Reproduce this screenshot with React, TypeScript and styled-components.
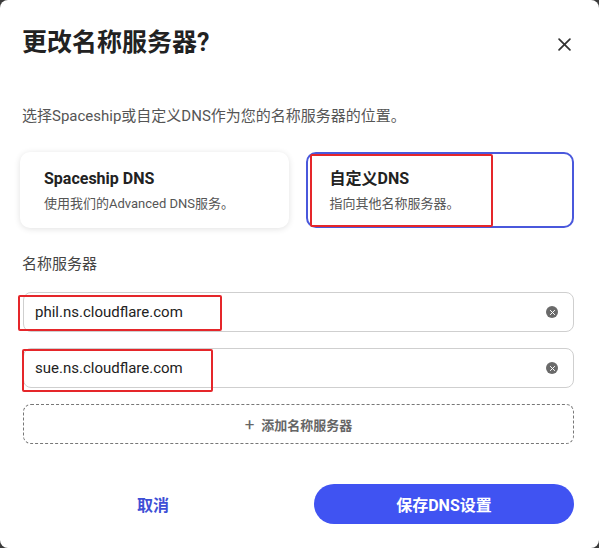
import React from "react";
import styled, { createGlobalStyle } from "styled-components";

const GlobalStyle = createGlobalStyle`
  html, body {
    margin: 0;
    padding: 0;
    background: #3b3b3b;
  }
  body {
    font-family: "Roboto", "Noto Sans CJK SC", sans-serif;
    color: #222;
  }
`;

const BLUE = "#4053f2";

const Dialog = styled.div`
  box-sizing: border-box;
  width: 599px;
  height: 548px;
  background: #fff;
  border-radius: 8px;
  padding: 26px 25px 0 22px;
  display: flex;
  flex-direction: column;
`;

const Header = styled.div`
  display: flex;
  align-items: center;
  justify-content: space-between;
  height: 34px;
`;

const Title = styled.h2`
  margin: 0;
  font-size: 25px;
  line-height: 34px;
  font-weight: 700;
  color: #222;
`;

const CloseButton = styled.button`
  border: 0;
  background: none;
  padding: 0;
  margin-right: 2px;
  margin-top: 2px;
  width: 16px;
  height: 16px;
  display: flex;
  align-items: center;
  justify-content: center;
  cursor: pointer;
`;

const Subtitle = styled.p`
  margin: 45px 0 0;
  font-size: 15px;
  line-height: 22px;
  color: #555;
`;

const Choices = styled.div`
  display: grid;
  grid-template-columns: 1fr 1fr;
  gap: 17px;
  margin: 25px 0 0 -2px;
`;

const Card = styled.div<{ $selected?: boolean }>`
  position: relative;
  box-sizing: border-box;
  height: 76px;
  border-radius: 10px;
  padding: 14px 22px 0;
  background: #fff;
  border: 2px solid ${(p) => (p.$selected ? "#4a58dc" : "transparent")};
  box-shadow: ${(p) => (p.$selected ? "none" : "0 1px 6px rgba(0, 0, 0, 0.12)")};
`;

const CardTitle = styled.div`
  font-size: 16px;
  line-height: 22px;
  font-weight: 700;
  color: #222;
`;

const CardText = styled.div`
  margin-top: 5px;
  font-size: 13px;
  line-height: 18px;
  color: #555;
`;

const Mark = styled.div`
  position: absolute;
  border: 2px solid #e5262a;
  border-radius: 2px;
  pointer-events: none;
`;

const Label = styled.div`
  margin-top: 25px;
  font-size: 15px;
  line-height: 22px;
  color: #444;
`;

const Fields = styled.div`
  display: flex;
  flex-direction: column;
  gap: 16px;
  margin: 17px 0 0 1px;
`;

const Field = styled.div`
  position: relative;
  box-sizing: border-box;
  height: 40px;
  border: 1px solid #cfcfcf;
  border-radius: 8px;
  display: flex;
  align-items: center;
  padding: 0 15px 0 11px;
`;

const FieldValue = styled.span`
  flex: 1;
  font-size: 15px;
  color: #222;
`;

const ClearIcon = styled.span`
  width: 12px;
  height: 12px;
  border-radius: 50%;
  background: #6a6a6a;
  display: flex;
  align-items: center;
  justify-content: center;
`;

const AddButton = styled.button`
  box-sizing: border-box;
  height: 40px;
  border: 1px dashed #777;
  border-radius: 8px;
  background: #fff;
  display: flex;
  align-items: center;
  justify-content: center;
  gap: 7px;
  font-family: inherit;
  font-size: 13px;
  font-weight: 700;
  color: #666;
  cursor: pointer;
`;

const Footer = styled.div`
  display: grid;
  grid-template-columns: 1fr 1fr;
  gap: 31px;
  margin: 40px 0 0 1px;
`;

const FooterButton = styled.button<{ $primary?: boolean }>`
  height: 40px;
  border: 0;
  border-radius: 20px;
  font-family: inherit;
  font-size: 16px;
  font-weight: 700;
  background: ${(p) => (p.$primary ? BLUE : "transparent")};
  color: ${(p) => (p.$primary ? "#fff" : "#3e4fd6")};
  cursor: pointer;
`;

const X = ({ size, color, width }: { size: number; color: string; width: number }) => (
  <svg width={size} height={size} viewBox="0 0 12 12">
    <path d="M1 1L11 11M11 1L1 11" stroke={color} strokeWidth={width} strokeLinecap="round" />
  </svg>
);

const servers = [
  { value: "phil.ns.cloudflare.com", mark: { left: -6, top: 2, width: 200, height: 32 } },
  { value: "sue.ns.cloudflare.com", mark: { left: -2, top: 0, width: 187, height: 39 } },
];

export default function App() {
  return (
    <>
      <GlobalStyle />
      <Dialog>
        <Header>
          <Title>更改名称服务器?</Title>
          <CloseButton aria-label="关闭">
            <X size={13} color="#333" width={1.6} />
          </CloseButton>
        </Header>
        <Subtitle>选择Spaceship或自定义DNS作为您的名称服务器的位置。</Subtitle>
        <Choices>
          <Card>
            <CardTitle>Spaceship DNS</CardTitle>
            <CardText>使用我们的Advanced DNS服务。</CardText>
          </Card>
          <Card $selected>
            <CardTitle>自定义DNS</CardTitle>
            <CardText>指向其他名称服务器。</CardText>
            <Mark style={{ left: 2, top: 0, width: 179, height: 69 }} />
          </Card>
        </Choices>
        <Label>名称服务器</Label>
        <Fields>
          {servers.map((s) => (
            <Field key={s.value}>
              <FieldValue>{s.value}</FieldValue>
              <ClearIcon>
                <X size={5} color="#fff" width={2.4} />
              </ClearIcon>
              <Mark style={s.mark} />
            </Field>
          ))}
          <AddButton>
            <span style={{ fontSize: 17, fontWeight: 400 }}>+</span>
            添加名称服务器
          </AddButton>
        </Fields>
        <Footer>
          <FooterButton>取消</FooterButton>
          <FooterButton $primary>保存DNS设置</FooterButton>
        </Footer>
      </Dialog>
    </>
  );
}
